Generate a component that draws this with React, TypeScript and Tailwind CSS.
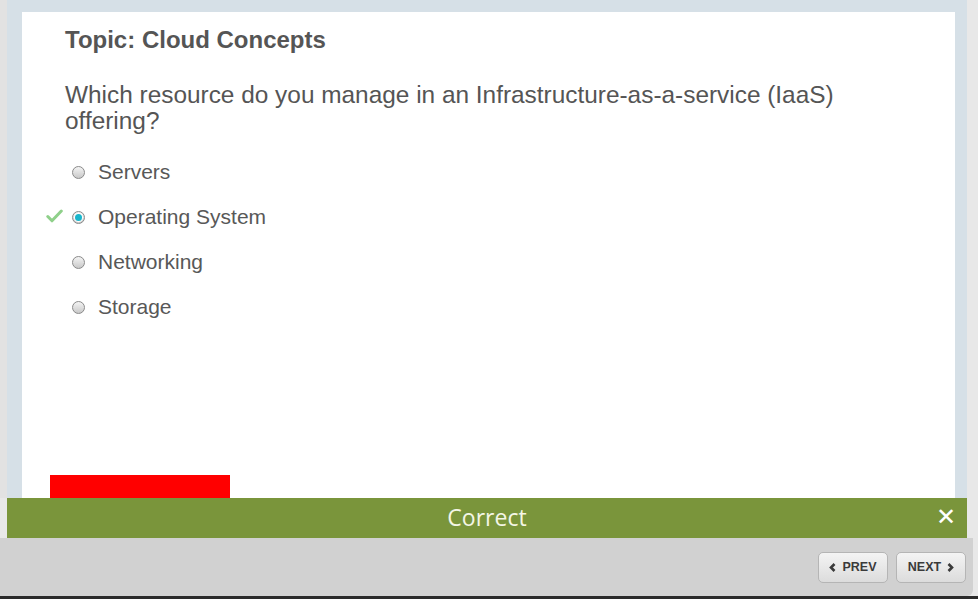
import React from "react";

const options = [
  { label: "Servers", selected: false },
  { label: "Operating System", selected: true },
  { label: "Networking", selected: false },
  { label: "Storage", selected: false },
];

function Radio({ selected }: { selected: boolean }) {
  return (
    <span className="w-[13px] h-[13px] rounded-full border border-[#8a8a8a] bg-gradient-to-b from-[#f4f4f4] to-[#c9c9c9] flex items-center justify-center">
      {selected && (
        <span className="w-[7px] h-[7px] rounded-full bg-[#19b6cc] ring-1 ring-white" />
      )}
    </span>
  );
}

function Check() {
  return (
    <svg width="17" height="14" viewBox="0 0 17 14">
      <path
        d="M1.8 7.5 L6 11.8 L15.3 2"
        fill="none"
        stroke="#8fd08a"
        strokeWidth="3"
        strokeLinecap="round"
        strokeLinejoin="round"
      />
    </svg>
  );
}

export default function App() {
  return (
    <div className="w-[978px] h-[599px] overflow-hidden bg-[#e8e8e8] flex flex-col font-['Liberation_Sans',Arial,sans-serif]">
      <div className="h-[498px] flex">
        <div className="w-[7px] bg-[#e2e2e2]" />
        <div className="w-[960px] bg-[#d6e0e7] pt-[12px] pl-[15px] pr-[12px]">
          <div className="h-full bg-white pl-[43px] pt-[14px] text-[#555555] relative">
            <h1 className="text-[24px] font-bold leading-[28px]">Topic: Cloud Concepts</h1>
            <p className="text-[24.4px] leading-[26px] mt-[28px] w-[800px]">
              Which resource do you manage in an Infrastructure-as-a-service (IaaS) offering?
            </p>
            <ul className="mt-[26px] flex flex-col gap-[21px]">
              {options.map((o) => (
                <li key={o.label} className="flex items-center h-[24px] text-[21px] text-[#585858] relative">
                  {o.selected && (
                    <span className="absolute left-[-19px] top-[4px]">
                      <Check />
                    </span>
                  )}
                  <span className="ml-[7px] mr-[13px]">
                    <Radio selected={o.selected} />
                  </span>
                  {o.label}
                </li>
              ))}
            </ul>
            <div className="absolute left-[28px] bottom-0 w-[180px] h-[23px] bg-[#ff0000]" />
          </div>
        </div>
      </div>
      <div className="ml-[7px] w-[960px] h-[40px] bg-[#7a953b] flex items-center justify-center relative">
        <span className="font-['Open_Sans',sans-serif] text-[23px] leading-[30px] text-[#f4f6e6] -mt-[3px]">Correct</span>
        <span className="absolute right-[11px] top-[7px] text-white text-[24px] leading-[24px] font-['DejaVu_Sans',sans-serif]">
          ✕
        </span>
      </div>
      <div className="w-[973px] h-[58px] bg-[#d1d1d1] rounded-br-[6px] flex justify-end items-start pt-[14px] pr-[7px] gap-[8px]">
        <button className="w-[70px] h-[31px] rounded-[5px] border border-[#b5b5b5] bg-gradient-to-b from-[#f4f4f4] to-[#dcdcdc] flex items-center justify-center gap-[6px] text-[12.5px] font-bold text-[#3a3a3a]">
          <svg width="7" height="9" viewBox="0 0 7 9">
            <path d="M5.5 1 L2 4.5 L5.5 8" fill="none" stroke="#3a3a3a" strokeWidth="2.6" />
          </svg>
          PREV
        </button>
        <button className="w-[70px] h-[31px] rounded-[5px] border border-[#b5b5b5] bg-gradient-to-b from-[#f4f4f4] to-[#dcdcdc] flex items-center justify-center gap-[6px] text-[12.5px] font-bold text-[#3a3a3a]">
          NEXT
          <svg width="7" height="9" viewBox="0 0 7 9">
            <path d="M1.5 1 L5 4.5 L1.5 8" fill="none" stroke="#3a3a3a" strokeWidth="2.6" />
          </svg>
        </button>
      </div>
      <div className="flex-1 bg-[#2a2a2a]" />
    </div>
  );
}
